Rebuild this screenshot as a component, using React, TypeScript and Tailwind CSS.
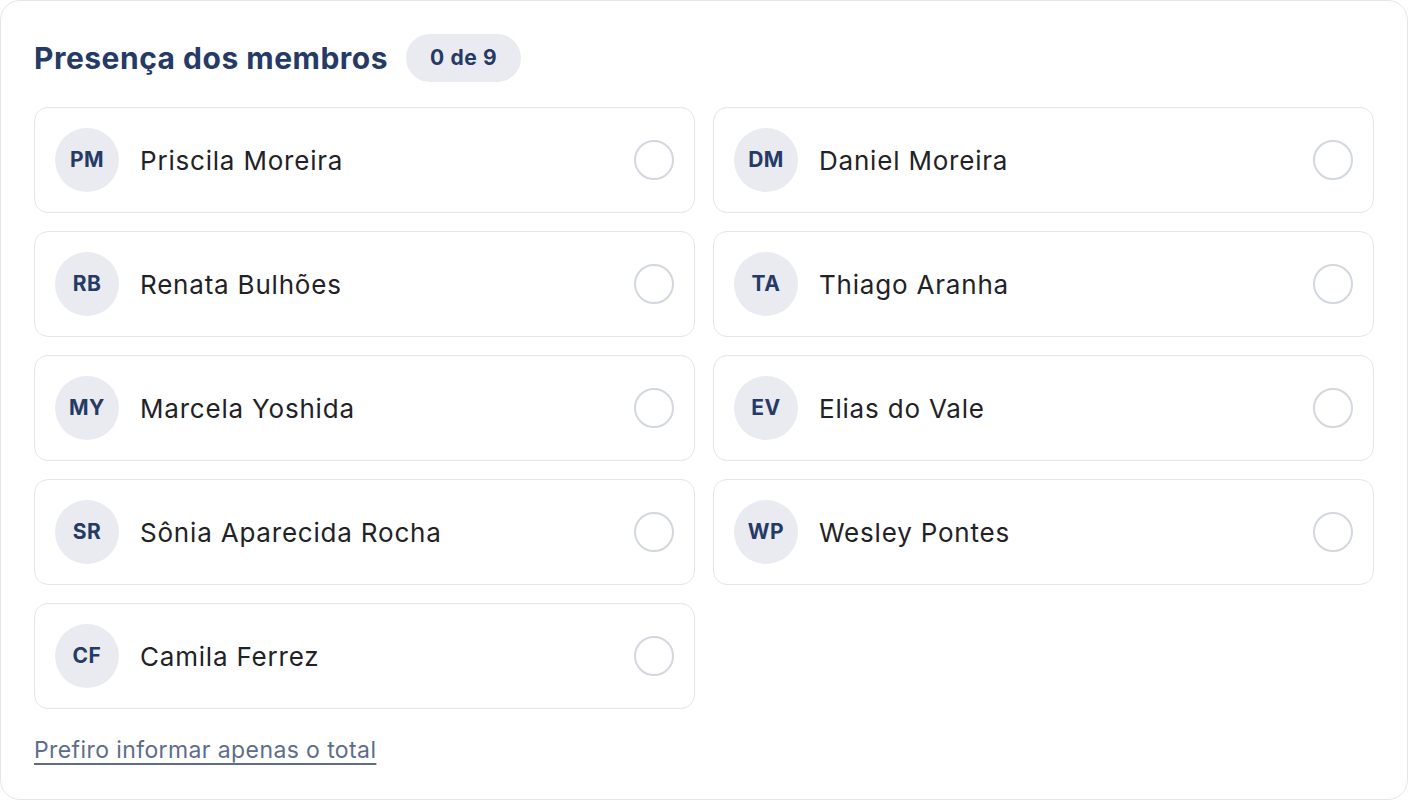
import React from 'react';

const members = [
  { initials: 'PM', name: 'Priscila Moreira' },
  { initials: 'DM', name: 'Daniel Moreira' },
  { initials: 'RB', name: 'Renata Bulhões' },
  { initials: 'TA', name: 'Thiago Aranha' },
  { initials: 'MY', name: 'Marcela Yoshida' },
  { initials: 'EV', name: 'Elias do Vale' },
  { initials: 'SR', name: 'Sônia Aparecida Rocha' },
  { initials: 'WP', name: 'Wesley Pontes' },
  { initials: 'CF', name: 'Camila Ferrez' },
];

const MemberRow: React.FC<{ initials: string; name: string }> = ({ initials, name }) => (
  <label className="flex h-[106px] items-center rounded-[14px] border border-[#e3e5ea] bg-white px-5 cursor-pointer">
    <div className="flex h-16 w-16 shrink-0 items-center justify-center rounded-full bg-[#e9ebf0] text-[21px] font-bold tracking-[0.5px] text-[#263a66]">
      {initials}
    </div>
    <span className="ml-[21px] flex-1 text-[26px] tracking-[0.8px] text-[#1f2226]">{name}</span>
    <span className="h-10 w-10 shrink-0 rounded-full border-2 border-[#d3d7de] bg-white" />
  </label>
);

const App: React.FC = () => {
  return (
    <div className="h-[800px] w-[1408px] bg-white font-['Inter','Noto_Sans',sans-serif]">
      <div className="flex h-full flex-col rounded-[20px] border border-[#e3e5ea] px-[33px] pt-[33px]">
        {/* Header */}
        <div className="flex h-12 items-center gap-[18px]">
          <h2 className="text-[30px] font-bold tracking-[0.5px] text-[#263a66]">Presença dos membros</h2>
          <span className="flex h-12 items-center rounded-full bg-[#e9ebf0] px-6 text-[21px] font-bold tracking-[0.6px] text-[#263a66]">
            0 de 9
          </span>
        </div>

        {/* Members */}
        <div className="mt-[25px] grid grid-cols-2 gap-x-[18px] gap-y-[18px]">
          {members.map((m) => (
            <MemberRow key={m.initials} initials={m.initials} name={m.name} />
          ))}
        </div>

        <div className="mt-6">
          <button className="text-[23px] tracking-[0.4px] text-[#5d6d89] underline underline-offset-[5px] decoration-[2px]">
            Prefiro informar apenas o total
          </button>
        </div>
      </div>
    </div>
  );
};

export default App;
